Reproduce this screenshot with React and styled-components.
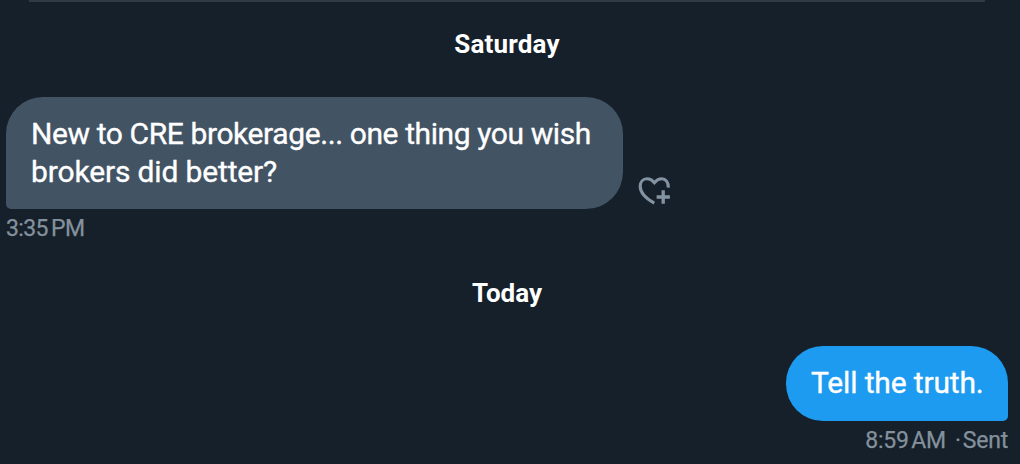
import React from "react"
import styled, { createGlobalStyle } from "styled-components"

const GlobalStyle = createGlobalStyle`
  body {
    margin: 0;
    background-color: #16202a;
    font-family: Roboto, "Liberation Sans", sans-serif;
  }
`

const Conversation = styled.main`
  box-sizing: border-box;
  display: flex;
  flex-direction: column;
  height: 464px;
  padding: 0 12px 0 6px;
  overflow: hidden;
`

const Divider = styled.hr`
  flex: none;
  width: 956px;
  height: 2px;
  margin: 0 0 0 23px;
  border: 0;
  background-color: #303a45;
`

const DayLabel = styled.h2`
  align-self: center;
  margin: ${props => props.$margin};
  color: #fff;
  font-size: 26px;
  font-weight: 700;
  line-height: 30px;
  letter-spacing: ${props => props.$spacing};
`

const Message = styled.article`
  display: flex;
  flex-direction: column;
  align-items: ${props => (props.$sent ? "flex-end" : "flex-start")};
`

const BubbleRow = styled.div`
  display: flex;
  align-items: flex-end;
  gap: 15px;
`

const Bubble = styled.p`
  box-sizing: border-box;
  width: ${props => (props.$sent ? "222px" : "617px")};
  margin: 0;
  padding: ${props => (props.$sent ? "18.5px 25px 19px" : "18px 25px 19px")};
  border-radius: ${props =>
    props.$sent ? "37px 37px 5px 37px" : "37px 37px 37px 5px"};
  background-color: ${props => (props.$sent ? "#1d9bf0" : "#425364")};
  color: #fff;
  font-size: 30px;
  line-height: 37.5px;
  white-space: nowrap;
  -webkit-text-stroke: 0.35px currentColor;
`

const Line = styled.span`
  display: block;
  letter-spacing: ${props => props.$spacing};
`

const ReactButton = styled.button`
  display: flex;
  margin: 0 0 3px;
  padding: 0;
  border: 0;
  background: none;
  color: #8493a1;
`

const Meta = styled.div`
  display: flex;
  margin-top: 6px;
  color: #84919d;
  font-size: 23px;
  line-height: 28px;
  letter-spacing: ${props => props.$spacing};
  word-spacing: ${props => props.$wordSpacing};
  -webkit-text-stroke: 0.25px currentColor;
`

const Dot = styled.span`
  margin: 0 2px 0 9px;
`

const HeartPlus = () => (
  <svg width="33" height="30" viewBox="0 0 33 30" fill="none" stroke="currentColor">
    <path
      strokeWidth="3.1"
      d="M30.3 11.7C30.6 6 27.6 2.8 23.8 2.8C21 2.8 18.6 4.1 16.4 6.7C14.2 4.1 11.6 2.8 9 2.8C5 2.8 2.2 6 2.2 10.2C2.2 16.5 6.7 21.8 16.3 27.1"
    />
    <path strokeWidth="3.3" d="M25.2 14.3V27.8M18.6 21H31.9" />
  </svg>
)

const App = () => (
  <>
    <GlobalStyle />
    <Conversation>
      <Divider />
      <DayLabel $margin="27px 0 38px" $spacing="0.2px">
        Saturday
      </DayLabel>
      <Message>
        <BubbleRow>
          <Bubble>
            <Line $spacing="-0.4px">New to CRE brokerage... one thing you wish</Line>
            <Line $spacing="-0.15px">brokers did better?</Line>
          </Bubble>
          <ReactButton aria-label="Add reaction">
            <HeartPlus />
          </ReactButton>
        </BubbleRow>
        <Meta $spacing="-0.6px" $wordSpacing="-2px">
          3:35 PM
        </Meta>
      </Message>
      <DayLabel $margin="35px 0 37.5px" $spacing="0">
        Today
      </DayLabel>
      <Message $sent>
        <Bubble $sent>
          <Line $spacing="-0.15px">Tell the truth.</Line>
        </Bubble>
        <Meta $spacing="-0.2px" $wordSpacing="-3px">
          <span>8:59 AM</span>
          <Dot>·</Dot>
          <span>Sent</span>
        </Meta>
      </Message>
    </Conversation>
  </>
)

export default App
